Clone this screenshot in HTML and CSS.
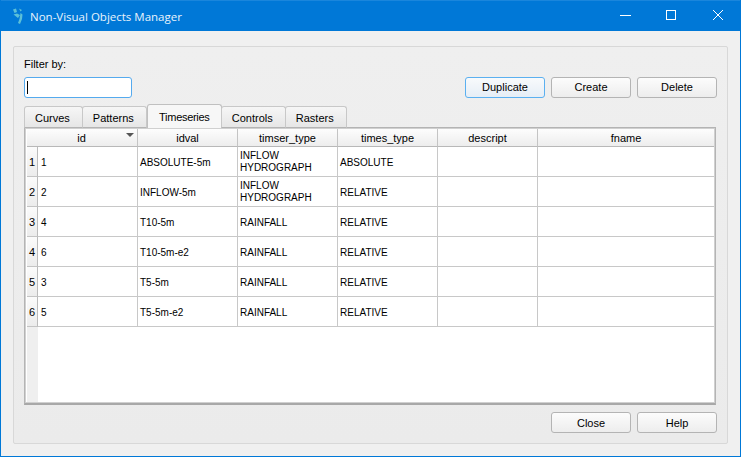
FILE: index.html
```html
<!DOCTYPE html>
<html>
<head>
<meta charset="utf-8">
<title>Non-Visual Objects Manager</title>
<link rel="stylesheet" href="styles.css">
</head>
<body>
<div class="window">
  <header class="titlebar">
    <svg class="app-icon" width="12" height="18" viewBox="0 0 12 18"><path d="M1 2.500 4 1.500 5 5 2.500 6ZM7 1.500 10 3 8.500 4.500ZM1.500 7.500 5 6.500 8 8 6 11ZM8.500 6 10.500 7.500 10 12 8 17 6 16 7.500 12Z" fill="#5cc0d8"/></svg>
    <span class="title">Non-Visual Objects Manager</span>
    <div class="winctl">
      <svg width="46" height="31" viewBox="0 0 46 31"><path d="M17 15.500H28" stroke="#fff"/></svg>
      <svg width="46" height="31" viewBox="0 0 46 31"><rect x="17.500" y="10.500" width="9" height="9" fill="none" stroke="#fff"/></svg>
      <svg width="46" height="31" viewBox="0 0 46 31"><path d="M18 10 28 20M28 10 18 20" stroke="#fff" fill="none"/></svg>
    </div>
  </header>
  <main class="content">
    <section class="panel">
      <div class="filter-label">Filter by:</div>
      <div class="toolbar">
        <div class="input"><span class="caret"></span></div>
        <div class="buttons">
          <button class="btn focus">Duplicate</button>
          <button class="btn">Create</button>
          <button class="btn">Delete</button>
        </div>
      </div>
      <div class="tabs">
        <div class="tab">Curves</div>
        <div class="tab">Patterns</div>
        <div class="tab active">Timeseries</div>
        <div class="tab">Controls</div>
        <div class="tab">Rasters</div>
      </div>
      <div class="frame">
        <div class="grid">
          <div class="hd corner">id<span class="sort"></span></div>
          <div class="hd">idval</div>
          <div class="hd">timser_type</div>
          <div class="hd">times_type</div>
          <div class="hd">descript</div>
          <div class="hd last">fname</div>

          <div class="rh">1</div><div class="c first">1</div><div class="c">ABSOLUTE-5m</div><div class="c two">INFLOW<br>HYDROGRAPH</div><div class="c">ABSOLUTE</div><div class="c"></div><div class="c last"></div>
          <div class="rh">2</div><div class="c first">2</div><div class="c">INFLOW-5m</div><div class="c two">INFLOW<br>HYDROGRAPH</div><div class="c">RELATIVE</div><div class="c"></div><div class="c last"></div>
          <div class="rh">3</div><div class="c first">4</div><div class="c">T10-5m</div><div class="c">RAINFALL</div><div class="c">RELATIVE</div><div class="c"></div><div class="c last"></div>
          <div class="rh">4</div><div class="c first">6</div><div class="c">T10-5m-e2</div><div class="c">RAINFALL</div><div class="c">RELATIVE</div><div class="c"></div><div class="c last"></div>
          <div class="rh">5</div><div class="c first">3</div><div class="c">T5-5m</div><div class="c">RAINFALL</div><div class="c">RELATIVE</div><div class="c"></div><div class="c last"></div>
          <div class="rh">6</div><div class="c first">5</div><div class="c">T5-5m-e2</div><div class="c">RAINFALL</div><div class="c">RELATIVE</div><div class="c"></div><div class="c last"></div>
        </div>
        <div class="filler"><div class="gutter"></div></div>
      </div>
      <div class="footer">
        <button class="btn">Close</button>
        <button class="btn">Help</button>
      </div>
    </section>
  </main>
</div>
</body>
</html>
```
FILE: styles.css
```css
* { box-sizing: border-box; }
html, body { margin: 0; padding: 0; }
body { width: 741px; height: 457px; overflow: hidden; font-family: "Liberation Sans", Arial, sans-serif; font-size: 11px; color: #000; }
.window { width: 741px; height: 457px; border: 1px solid #0078d7; border-top: 0; background: #f0f0f0; display: flex; flex-direction: column; }
.titlebar { height: 31px; flex: none; background: #0078d7; display: flex; align-items: center; color: #fff; border-top: 1px solid #1a86dc; }
.app-icon { margin-left: 11px; margin-top: -1px; flex: none; }
.title { margin-left: 6px; font-family: "Open Sans", sans-serif; font-size: 11.5px; color: #e8f3fc; }
.winctl { margin-left: auto; margin-right: -1px; display: flex; margin-top: -1px; }
.content { flex: 1; padding: 15px 12px 12px 12px; }
.panel { height: 398px; border: 1px solid #d8d8d8; border-radius: 2px; background: linear-gradient(#efefef, #ebebeb); padding: 0 10px; display: flex; flex-direction: column; }
.filter-label { height: 30px; padding-top: 11px; line-height: 13px; }
.toolbar { display: flex; justify-content: space-between; height: 21px; align-items: flex-start; }
.input { width: 108px; height: 21px; background: #fff; border: 1px solid #55aaee; border-radius: 3px; padding: 3px 0 0 2px; }
.caret { display: block; width: 1px; height: 13px; background: #000; }
.buttons { display: flex; gap: 6px; }
.btn { width: 80px; height: 21px; padding: 0 0 2px; border: 1px solid #b4b4b4; border-radius: 3px; background: linear-gradient(#fcfcfc, #ededed); font: inherit; color: #000; }
.btn.focus { border-color: #5bb0f0; background: linear-gradient(#f8fafc, #e6eef6); }
.tabs { display: flex; height: 24px; margin-top: 6px; align-items: flex-end; position: relative; z-index: 1; }
.tab { height: 22px; margin-right: -1px; border: 1px solid #c8c8c8; border-bottom: 1px solid #b4b4b4; border-radius: 3px 3px 0 0; background: linear-gradient(#f6f6f6, #e6e6e6); padding: 4px 12px 0 10px; line-height: 14px; }
.tab.active { width: 75px; height: 24px; margin-left: 1px; background: #f7f7f7; border-color: #c0c0c0; border-bottom: 0; padding: 5px 0 0; text-align: center; letter-spacing: -0.3px; }
.frame { margin-top: -1px; height: 278px; width: 692px; border: 1px solid #b4b4b4; border-bottom: 2px solid #a8a8a8; padding: 1px 1px 1px 2px; background: #fff; box-shadow: inset 0 0 0 1px #d0d0d0; display: flex; flex-direction: column; }
.grid { display: grid; grid-template-columns: 11px repeat(5, 100px) 176px; grid-template-rows: 18px repeat(6, 30px); flex: none; }
.hd { border-right: 1px solid #c4c4c4; border-bottom: 1px solid #b8b8b8; background: linear-gradient(#fdfdfd, #ededed); text-align: center; line-height: 19px; position: relative; }
.corner { grid-column: span 2; padding-right: 1px; }
.sort { position: absolute; right: 3px; top: 4px; width: 0; height: 0; border: 4px solid transparent; border-top: 4px solid #555; border-bottom: 0; }
.rh { border-right: 1px solid #bbb; border-bottom: 1px solid #c4c4c4; background: linear-gradient(#fbfbfb, #ececec); display: flex; align-items: center; justify-content: center; padding-top: 1px; }
.c { border-right: 1px solid #c8c8c8; border-bottom: 1px solid #c8c8c8; padding: 9px 0 0 2px; line-height: 13px; font-size: 10px; background: #fff; }
.c.first { padding-left: 3px; }
.c.two { padding-top: 3px; line-height: 12px; }
.last { border-right: 0; }
.filler { flex: 1; display: flex; }
.gutter { width: 11px; background: #efefef; }
.footer { display: flex; justify-content: flex-end; gap: 6px; margin-top: 7px; }
.footer .btn { padding-bottom: 0; }
```
